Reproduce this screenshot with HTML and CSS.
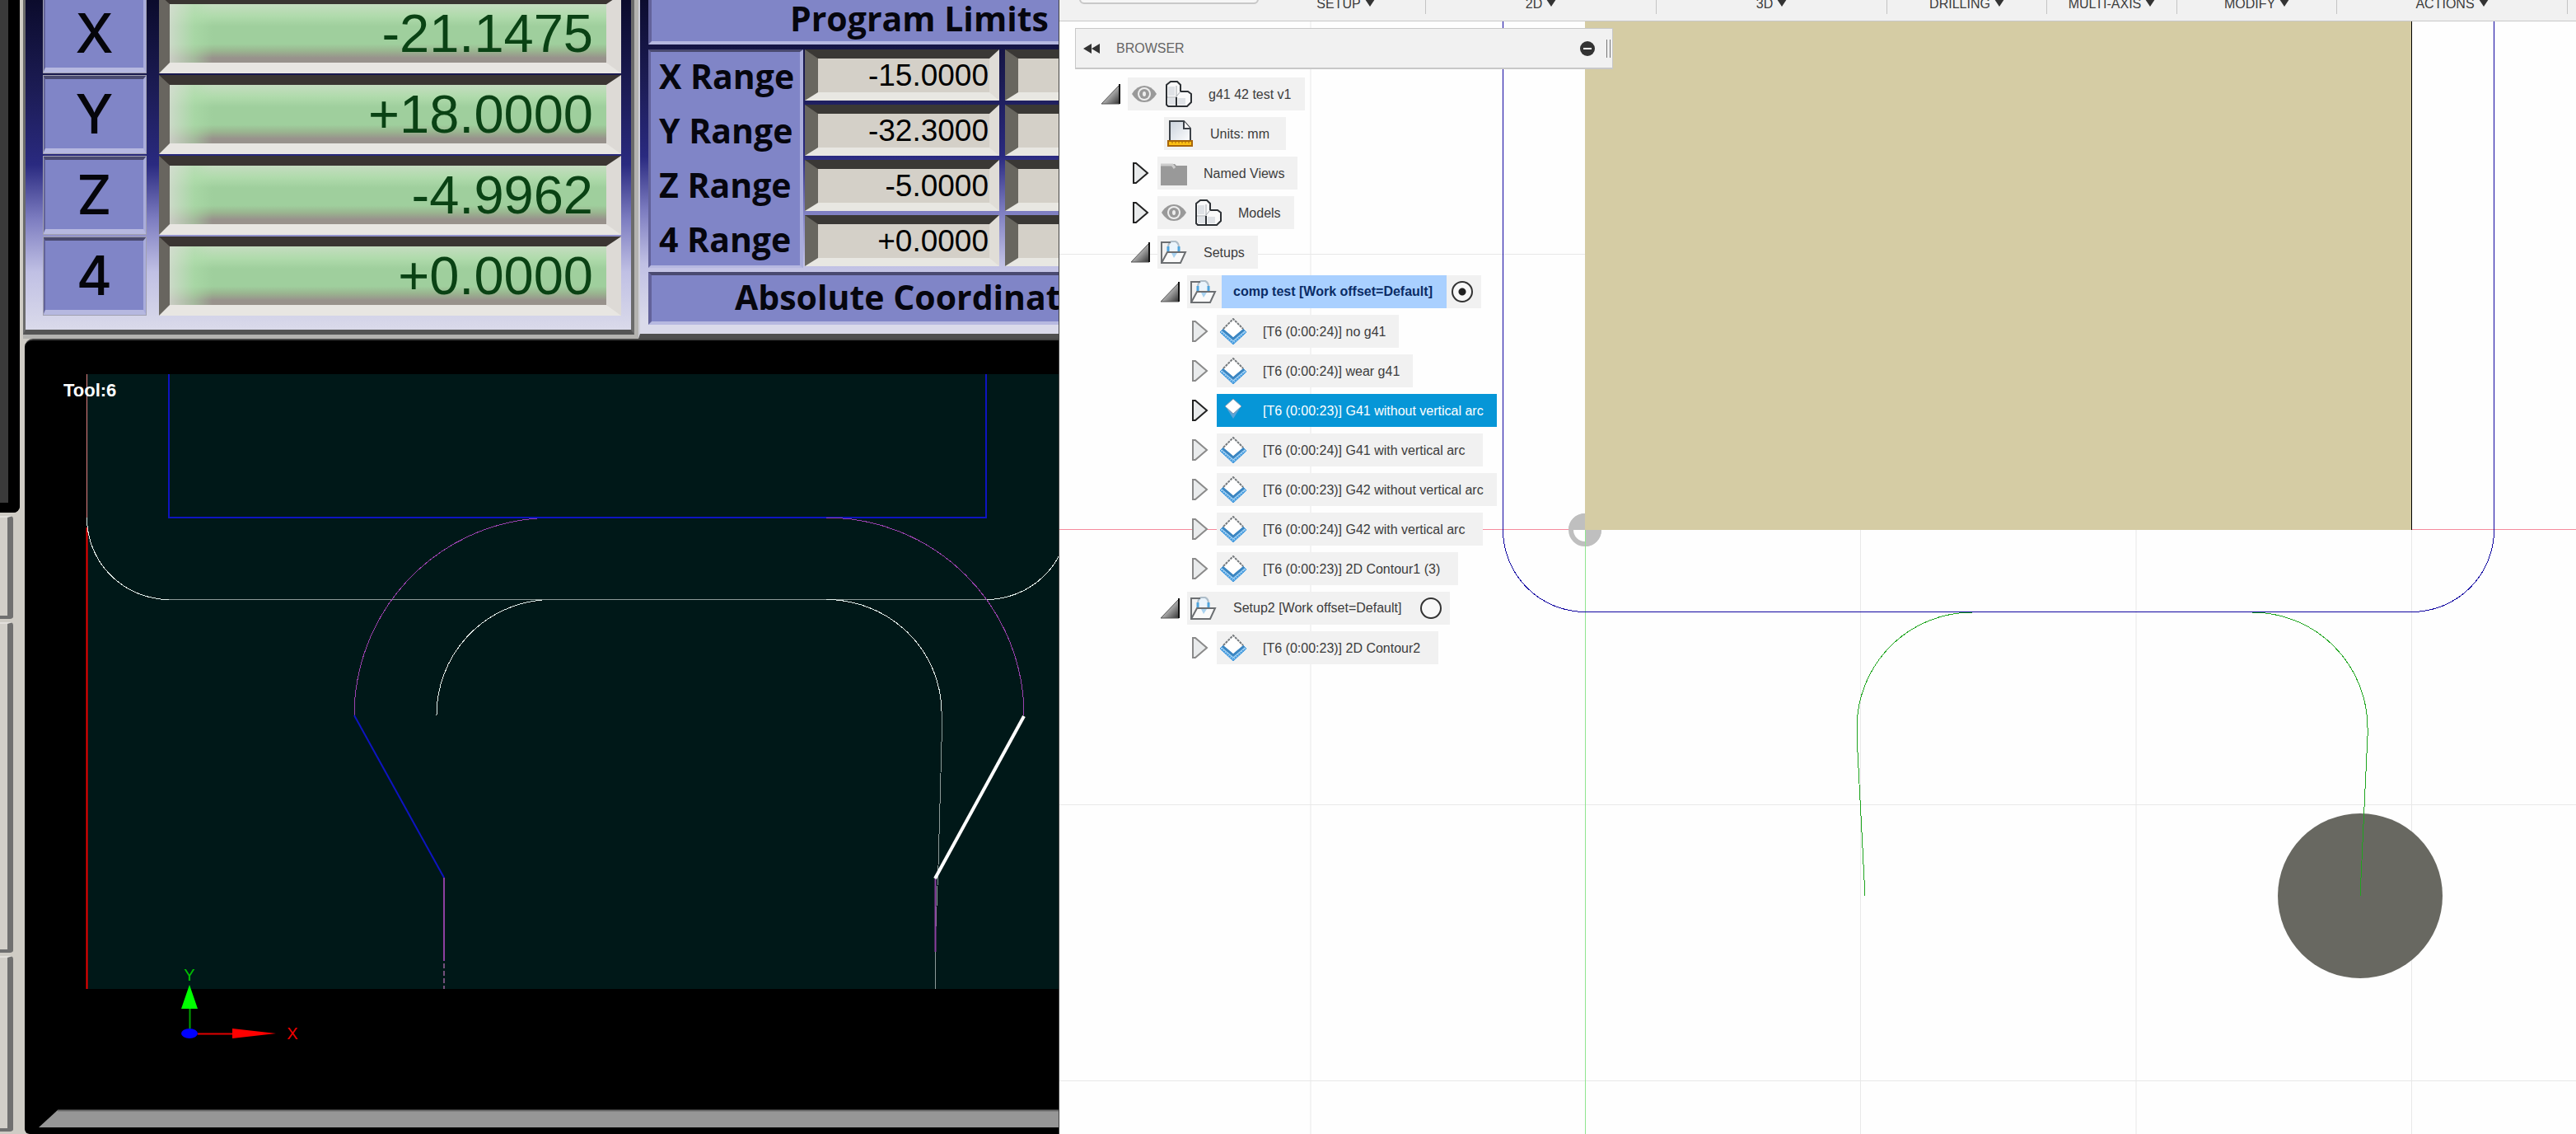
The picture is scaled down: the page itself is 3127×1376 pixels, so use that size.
FILE: index.html
```html
<!DOCTYPE html>
<html lang="en">
<head>
    <meta charset="UTF-8">
    <meta name="viewport" content="width=device-width, initial-scale=1.0">
    <title>Toolpath comparison</title>
    <link rel="stylesheet" href="styles.css">
</head>
<body>
    <!-- shared icons -->
    <svg class="defs" width="0" height="0">
        <defs>
            <linearGradient id="triFill" x1="0" y1="0" x2="1" y2="1">
                <stop offset="0.3" stop-color="#dddddd"/>
                <stop offset="1" stop-color="#333333"/>
            </linearGradient>
            <linearGradient id="pageFill" x1="0" y1="0" x2="1" y2="1">
                <stop offset="0" stop-color="#c9d2dc"/>
                <stop offset="1" stop-color="#ffffff"/>
            </linearGradient>
        </defs>
        <symbol id="open" viewBox="0 0 26 28">
            <path d="M2 26 L24 3 V26 Z" fill="url(#triFill)" stroke="#555" stroke-width="1"/>
            <path d="M24 2 V26" stroke="#111" stroke-width="2"/>
        </symbol>
        <symbol id="closed" viewBox="0 0 26 28">
            <path d="M5 2 H8 L22 14 L8 26 H5 Z" fill="#e9ebec" stroke="currentColor" stroke-width="2"/>
        </symbol>
        <symbol id="eye" viewBox="0 0 32 32">
            <path d="M1 16 Q7 6 16 6 Q25 6 31 16 Q25 26 16 26 Q7 26 1 16 Z" fill="#999"/>
            <circle cx="16" cy="16" r="8" fill="#eee"/>
            <circle cx="16" cy="16" r="6" fill="#999"/>
            <ellipse cx="16" cy="16" rx="2" ry="3" fill="#eee"/>
        </symbol>
        <symbol id="body" viewBox="0 0 32 32">
            <path d="M1 5 L6 1 H14 L18 5 V13 H27 L31 16 V26 L26 31 H3 L1 29 Z" fill="#fafafa" stroke="#2d3135" stroke-width="2"/>
            <path d="M3 7 H11 V18 H3 Z M3 21 H12 V29 H3 Z M15 21 H24 V29 H15 Z" fill="#dfe2e6"/>
            <path d="M2 20 H13 M13 30 V19 L18 13 M13 19 V6" stroke="#a4a9ae" stroke-width="1" fill="none"/>
            <path d="M13 20 V31" stroke="#2d3135" stroke-width="2"/>
        </symbol>
        <symbol id="page" viewBox="0 0 32 32">
            <path d="M3 26 V1 H20 L28 10 V26" fill="url(#pageFill)" stroke="#3c4248" stroke-width="2"/>
            <path d="M20 1 V10 H28" fill="#fff" stroke="#3c4248" stroke-width="2"/>
            <rect x="1" y="25" width="29" height="6" fill="#fdc114" stroke="#a8660a" stroke-width="2"/>
            <path d="M6 25 V28 M10 25 V28 M14 25 V28 M18 25 V28 M22 25 V28 M26 25 V28" stroke="#a8660a" stroke-width="1"/>
        </symbol>
        <symbol id="folder" viewBox="0 0 32 32">
            <path d="M0 5 H17 L19 7 H32 V31 H0 Z" fill="#999"/>
            <path d="M0 6 H14 L17 10" fill="none" stroke="#ccc" stroke-width="3"/>
        </symbol>
        <symbol id="setup" viewBox="0 0 32 32">
            <path d="M9 14 V10 Q9 5 13 3 H18 Q22 5 22 10 V14" fill="#eaf4fc" stroke="#aebdc9" stroke-width="2"/>
            <path d="M9 9 V15 M22 9 V15" stroke="#4ea3dc" stroke-width="3"/>
            <path d="M12 4 H1 V29" fill="none" stroke="#6c6f72" stroke-width="2"/>
            <path d="M8 16 H30 L24 29 H1 Z" fill="#fafafa" stroke="#6c6f72" stroke-width="2"/>
            <path d="M13 17 H20 L16 23 Z" fill="#a9d2f0"/>
        </symbol>
        <symbol id="op" viewBox="0 0 32 32">
            <path d="M0 17 L4 13 L16 24 L28 13 L32 17 L16 32 Z" fill="#a5d3f5" stroke="#3f97dc" stroke-width="1"/>
            <path d="M2 18 L16 30 L30 18" fill="none" stroke="#3f97dc" stroke-width="2" stroke-dasharray="2 1"/>
            <path d="M3 14 L16 25 L29 14" fill="none" stroke="#3b86c2" stroke-width="3"/>
            <path d="M16 1 L28 13 L16 23 L4 13 Z" fill="#fff"/>
            <path d="M4 13 L16 1 L28 13" fill="none" stroke="#75797c" stroke-width="2" stroke-dasharray="3 1"/>
        </symbol>
        <symbol id="opActive" viewBox="0 0 32 32">
            <path d="M16 12 L23 15 L16 26 L9 15 Z" fill="#7fa9d8" opacity="0.7"/>
            <path d="M16 2 L26 11 L16 20 L6 11 Z" fill="#fff" stroke="#7f98ae" stroke-width="1"/>
        </symbol>
    </svg>

    <div class="screen">
        <section class="mach">
            <div class="side">
                <div class="side-screen"></div>
                <div class="side-key key-1"></div>
                <div class="side-key key-2"></div>
                <div class="side-key key-3"></div>
            </div>

            <div class="mach-main">
                <div class="panels">
                    <div class="panel dro">
                        <label class="axis" for="dro-x">X</label>
                        <input class="readout" id="dro-x" value="-21.1475" readonly>
                        <label class="axis" for="dro-y">Y</label>
                        <input class="readout" id="dro-y" value="+18.0000" readonly>
                        <label class="axis" for="dro-z">Z</label>
                        <input class="readout" id="dro-z" value="-4.9962" readonly>
                        <label class="axis" for="dro-4">4</label>
                        <input class="readout" id="dro-4" value="+0.0000" readonly>
                    </div>

                    <div class="panel limits">
                        <div class="plate plate-top">Program Limits</div>
                        <div class="ranges">
                            <div class="range-labels">
                                <label for="min-x">X Range</label>
                                <label for="min-y">Y Range</label>
                                <label for="min-z">Z Range</label>
                                <label for="min-4">4 Range</label>
                            </div>
                            <div class="range-col">
                                <input class="limit" id="min-x" value="-15.0000" readonly>
                                <input class="limit" id="min-y" value="-32.3000" readonly>
                                <input class="limit" id="min-z" value="-5.0000" readonly>
                                <input class="limit" id="min-4" value="+0.0000" readonly>
                            </div>
                            <div class="range-col">
                                <input class="limit" aria-label="X max" readonly>
                                <input class="limit" aria-label="Y max" readonly>
                                <input class="limit" aria-label="Z max" readonly>
                                <input class="limit" aria-label="4 max" readonly>
                            </div>
                        </div>
                        <div class="plate plate-bottom">Absolute Coordinates</div>
                    </div>
                </div>

                <div class="display">
                    <svg class="plot" viewBox="30 413 1256 963" preserveAspectRatio="xMinYMin slice">
                        <rect x="105" y="454" width="1300" height="746" fill="#001818"/>
                        <!-- soft limits -->
                        <path class="hair" d="M105.5 454 V628" stroke="#e08080"/>
                        <path d="M105.5 640 V1200" stroke="#f00000" stroke-width="2"/>
                        <!-- part outline -->
                        <path d="M205 454 V628 H1197 V454" fill="none" stroke="#0e14c0" stroke-width="2"/>
                        <path class="hair" d="M205 727.5 H1197" stroke="#8c9a98"/>
                        <path class="hair" d="M105.5 628 A100 99 0 0 0 205 727.5 M1197 727.5 A100 99 0 0 0 1297 628" stroke="#e4f0ec"/>
                        <path class="hair" d="M530 868 A140 140 0 0 1 658 728 M1003 727.5 A140 137 0 0 1 1143 863" stroke="#e4f0ec"/>
                        <path class="hair" d="M1144 863 L1139 1050 L1135 1150 V1200" stroke="#8c9a98"/>
                        <!-- compensated moves -->
                        <path class="hair" d="M430 868 A240 240 0 0 1 652 629 M1003 628 A240 240 0 0 1 1243 868" stroke="#9a42b0"/>
                        <path d="M430 868 L539 1065" stroke="#0e14c0" stroke-width="2"/>
                        <path d="M539 1065 V1166 M1135.5 1066 V1155" stroke="#8c3fa0" stroke-width="2"/>
                        <path d="M539 1169 V1200" stroke="#73507c" stroke-width="2" stroke-dasharray="6 3"/>
                        <path d="M1243 869 L1135 1066" stroke="#fff" stroke-width="4"/>
                        <text class="tool" x="77" y="481">Tool:6</text>
                        <!-- axis triad -->
                        <path d="M230.5 1248 V1222" stroke="#00a000" stroke-width="2"/>
                        <path d="M230 1195 L240 1224 H220 Z" fill="#00ff00"/>
                        <path d="M240 1254.5 H282" stroke="#e00000" stroke-width="2"/>
                        <path d="M282 1248 L335 1254 L282 1260 Z" fill="#ff0000"/>
                        <ellipse cx="230" cy="1254" rx="10" ry="6" fill="#0000ff"/>
                        <text class="axis-y" x="230" y="1190">Y</text>
                        <text class="axis-x" x="355" y="1261">X</text>
                        <path d="M70 1347 H1400 V1368 H47 Z" fill="#969696"/>
                        <path d="M70 1347.5 H1400" stroke="#6b6b6b" stroke-width="2"/>
                    </svg>
                </div>
            </div>
        </section>

        <section class="fusion">
            <nav class="toolbar">
                <div class="workspace"><button class="workspace-btn" aria-label="Workspace"></button></div>
                <button class="menu">SETUP<i class="caret"></i></button>
                <button class="menu">2D<i class="caret"></i></button>
                <button class="menu">3D<i class="caret"></i></button>
                <button class="menu">DRILLING<i class="caret"></i></button>
                <button class="menu">MULTI-AXIS<i class="caret"></i></button>
                <button class="menu">MODIFY<i class="caret"></i></button>
                <button class="menu">ACTIONS<i class="caret"></i></button>
            </nav>

            <div class="canvas">
                <svg class="scene" viewBox="1286 26 1841 1350" preserveAspectRatio="xMinYMin slice">
                    <path d="M1591 26 V1376 M2258.5 643 V1376 M2593 643 V1376 M2927.5 643 V1376 M1286 308.5 H1924 M1286 976.5 H3127 M1286 1311.5 H3127" stroke="#e8e8e8" stroke-width="1"/>
                    <path d="M1286 642.5 H1924 M2928 642.5 H3127" stroke="#f58a9c" stroke-width="1"/>
                    <!-- origin marker -->
                    <circle cx="1924" cy="643" r="17" fill="#fff" stroke="#bfbfbf" stroke-width="6"/>
                    <path d="M1924 643 V623 A20 20 0 0 0 1904 643 Z M1924 643 V663 A20 20 0 0 0 1944 643 Z" fill="#bfbfbf"/>
                    <path d="M1924.5 643 V1376" stroke="#8fe58f" stroke-width="1"/>
                    <!-- stock -->
                    <rect x="1924" y="26" width="1003" height="617" fill="#d5cca4"/>
                    <path d="M2927.5 26 V643" stroke="#000" stroke-width="1"/>
                    <!-- tool -->
                    <circle cx="2865" cy="1087" r="100" fill="#686861"/>
                    <!-- toolpath -->
                    <path class="hair" d="M2394 743 A140 140 0 0 0 2254 883 V893 L2264 1087 M2734 743 A140 140 0 0 1 2874 883 V893 L2865 1087" stroke="#1fa51f"/>
                    <path class="hair" d="M1824.5 26 V643 A100 99.5 0 0 0 1924.5 742.5 H2927.5 A100 99.5 0 0 0 3027.5 643 V26" stroke="#1004a0"/>
                </svg>

                <aside class="browser">
                    <header class="browser-head">
                        <svg class="rewind" viewBox="0 0 20 12"><path d="M10 0 V12 L0 6 Z M20 0 V12 L10 6 Z" fill="#333"/></svg>
                        <span>BROWSER</span>
                        <button class="collapse" aria-label="Collapse"></button>
                        <i class="grip"></i>
                    </header>

                    <ul class="tree">
                        <li>
                            <div class="row"><svg class="arrow"><use href="#open"/></svg><div class="node"><svg class="icon"><use href="#eye"/></svg><svg class="icon"><use href="#body"/></svg><span>g41 42 test v1</span></div></div>
                            <ul>
                                <li><div class="row"><div class="node units"><svg class="icon"><use href="#page"/></svg><span>Units: mm</span></div></div></li>
                                <li><div class="row"><svg class="arrow"><use href="#closed"/></svg><div class="node"><svg class="icon"><use href="#folder"/></svg><span>Named Views</span></div></div></li>
                                <li><div class="row"><svg class="arrow"><use href="#closed"/></svg><div class="node"><svg class="icon"><use href="#eye"/></svg><svg class="icon"><use href="#body"/></svg><span>Models</span></div></div></li>
                                <li>
                                    <div class="row"><svg class="arrow"><use href="#open"/></svg><div class="node"><svg class="icon"><use href="#setup"/></svg><span>Setups</span></div></div>
                                    <ul>
                                        <li>
                                            <div class="row"><svg class="arrow"><use href="#open"/></svg><div class="node setup current"><svg class="icon"><use href="#setup"/></svg><label for="setup-1">comp test [Work offset=Default]</label><input type="radio" name="setup" id="setup-1" checked></div></div>
                                            <ul>
                                                <li><div class="row"><svg class="arrow dim"><use href="#closed"/></svg><div class="node"><svg class="icon"><use href="#op"/></svg><span>[T6 (0:00:24)] no g41</span></div></div></li>
                                                <li><div class="row"><svg class="arrow dim"><use href="#closed"/></svg><div class="node"><svg class="icon"><use href="#op"/></svg><span>[T6 (0:00:24)] wear g41</span></div></div></li>
                                                <li><div class="row"><svg class="arrow"><use href="#closed"/></svg><div class="node selected"><svg class="icon"><use href="#opActive"/></svg><span>[T6 (0:00:23)] G41 without vertical arc</span></div></div></li>
                                                <li><div class="row"><svg class="arrow dim"><use href="#closed"/></svg><div class="node loose"><svg class="icon"><use href="#op"/></svg><span>[T6 (0:00:24)] G41 with vertical arc</span></div></div></li>
                                                <li><div class="row"><svg class="arrow dim"><use href="#closed"/></svg><div class="node"><svg class="icon"><use href="#op"/></svg><span>[T6 (0:00:23)] G42 without vertical arc</span></div></div></li>
                                                <li><div class="row"><svg class="arrow dim"><use href="#closed"/></svg><div class="node loose"><svg class="icon"><use href="#op"/></svg><span>[T6 (0:00:24)] G42 with vertical arc</span></div></div></li>
                                                <li><div class="row"><svg class="arrow dim"><use href="#closed"/></svg><div class="node loose"><svg class="icon"><use href="#op"/></svg><span>[T6 (0:00:23)] 2D Contour1 (3)</span></div></div></li>
                                            </ul>
                                        </li>
                                        <li>
                                            <div class="row"><svg class="arrow"><use href="#open"/></svg><div class="node setup"><svg class="icon"><use href="#setup"/></svg><label for="setup-2">Setup2 [Work offset=Default]</label><input type="radio" name="setup" id="setup-2"></div></div>
                                            <ul>
                                                <li><div class="row"><svg class="arrow dim"><use href="#closed"/></svg><div class="node loose"><svg class="icon"><use href="#op"/></svg><span>[T6 (0:00:23)] 2D Contour2</span></div></div></li>
                                            </ul>
                                        </li>
                                    </ul>
                                </li>
                            </ul>
                        </li>
                    </ul>
                </aside>
            </div>
        </section>
    </div>
</body>
</html>
```

FILE: styles.css
```css
* {
    box-sizing: border-box;
}
body {
    margin: 0;
    font-family: "Liberation Sans", Arial, sans-serif;
    font-size: 16px;
    overflow: hidden;
}
button, input {
    font: inherit;
    margin: 0;
}
.defs {
    position: absolute;
}
.screen {
    display: grid;
    grid-template-columns: 1286fr 1841fr;
    height: 100vh;
}

/* machine controller */
.mach {
    display: flex;
    min-width: 0;
    overflow: hidden;
    background: #cfccc5;
}
.side {
    width: 28px;
    flex: none;
    display: flex;
    flex-direction: column;
    gap: 4px;
    padding-bottom: 3px;
}
.side-screen {
    width: 24px;
    height: 622px;
    flex: none;
    background: #3a3a3a;
    border: solid #000;
    border-width: 0 14px 12px 0;
    border-radius: 0 0 8px 0;
}
.side-key {
    width: 16px;
    background: #d2cfc9;
    border: solid #707070;
    border-width: 0 7px 4px 0;
    border-top: 2px solid #e2e0dc;
    border-radius: 0 4px 4px 0;
}
.key-1 {
    flex: 122;
}
.key-2 {
    flex: 405;
}
.key-3 {
    flex: 212;
}
.mach-main {
    flex: 1;
    min-width: 0;
    display: flex;
    flex-direction: column;
}
.panels {
    display: flex;
    gap: 5px;
    height: 411px;
    flex: none;
    overflow: hidden;
    background: #b4b3b0;
}
.panel {
    background: linear-gradient(#0b0b2c 0, #1c1c55 110px, #2a2a80 200px, #7c7cc0 265px, #c0c0e4 330px, #dadaea 400px);
}
.dro {
    width: 742px;
    height: 406px;
    flex: none;
    display: grid;
    grid-template-columns: 126px 561px;
    grid-auto-rows: 96px;
    gap: 2px 15px;
    align-content: end;
    padding: 0 0 17px 21px;
    border: solid #6b6b6b;
    border-width: 0 4px 6px 3px;
    border-bottom-color: #555;
    overflow: hidden;
}
.axis {
    display: flex;
    align-items: center;
    justify-content: center;
    font-family: Inter, sans-serif;
    font-size: 66px;
    font-weight: 500;
    line-height: 1;
    color: #05050a;
    background: #8085c7;
    border: solid;
    border-width: 5px 4px 7px 3px;
    border-color: #4a4a70 #a9acdc #b6b8e0 #62629a;
    outline: 1px solid #a0a0b0;
    outline-offset: -1px;
}
.readout {
    width: 100%;
    height: 96px;
    padding: 0 16px 0 0;
    font-size: 65px;
    line-height: 72px;
    text-align: right;
    color: #0a4214;
    border: solid;
    border-width: 12px 18px 13px 13px;
    border-color: #3a3532 #dddad6 #e8e6e2 #68655f;
    border-radius: 0;
    outline: none;
    background:
        linear-gradient(90deg, rgba(214, 220, 210, 0.8), rgba(176, 222, 172, 0.5) 30px, transparent 52px),
        linear-gradient(#c5dcc0 0, #b0dbac 20%, #9fcf9d 38%, #9fcf9d 68%, #9ab590 80%, #98928c 92%);
}
.limits {
    flex: 1;
    min-width: 0;
    margin-top: -10px;
    padding: 0 0 0 10px;
    border-left: 2px solid #d0d0d8;
    border-bottom: 6px solid #505050;
    overflow: hidden;
    white-space: nowrap;
}
.plate, .range-labels {
    font-family: "Open Sans", sans-serif;
    font-size: 41px;
    font-weight: 700;
    color: #06060e;
    background: #8085c7;
    border: solid;
    border-color: #4a4a70 #a9acdc #b6b8e0 #62629a;
}
.plate {
    width: 700px;
    border-width: 4px;
}
.plate-top {
    height: 64px;
    line-height: 56px;
    padding-left: 168px;
}
.plate-bottom {
    height: 64px;
    line-height: 52px;
    padding-left: 101px;
    margin-top: 5px;
}
.ranges {
    display: flex;
    gap: 7px;
    margin-top: 6px;
}
.range-labels {
    width: 188px;
    flex: none;
    margin-right: -5px;
    border-width: 3px 4px 3px 3px;
    padding-left: 10px;
    display: flex;
    flex-direction: column;
    gap: 5px;
}
.range-labels label {
    height: 61px;
    line-height: 58px;
}
.range-col {
    width: 236px;
    flex: none;
    display: flex;
    flex-direction: column;
    gap: 5px;
}
.limit {
    width: 236px;
    height: 62px;
    padding: 0 1px;
    font-size: 37px;
    text-align: right;
    color: #000;
    background: #d4d0c8;
    border: solid;
    border-width: 11px 12px 10px 16px;
    border-color: #3a3835 #e0ddd7 #e8e7e2 #68665f;
    border-radius: 0;
    outline: none;
}
.display {
    flex: 1;
    min-height: 0;
    margin-left: 2px;
    background: #000;
    border-top: 2px solid #444;
    border-radius: 10px 0 0 6px;
    overflow: hidden;
}
.plot, .scene {
    display: block;
    width: 100%;
    height: 100%;
}
.hair {
    fill: none;
    stroke-width: 1px;
    shape-rendering: crispEdges;
}
.tool {
    font-size: 22px;
    font-weight: bold;
    fill: #fff;
}
.axis-x, .axis-y {
    font-size: 20px;
    text-anchor: middle;
}
.axis-x {
    fill: #f00000;
}
.axis-y {
    fill: #00c000;
}

/* CAM window */
.fusion {
    position: relative;
    min-width: 0;
    display: flex;
    flex-direction: column;
    color: #3c3c3c;
    box-shadow: -1px 0 #444;
}
.toolbar {
    height: 26px;
    flex: none;
    display: grid;
    grid-template-columns: 251fr 194fr 280fr 280fr 194fr 158fr 194fr 280fr 10fr;
    background: #f1f1f1;
    border-bottom: 1px solid #c8c8c8;
    overflow: hidden;
}
.workspace {
    padding-left: 24px;
}
.workspace-btn {
    display: block;
    width: 218px;
    height: 30px;
    margin-top: -25px;
    background: #f6f6f6;
    border: 2px solid #c8c8c8;
    border-radius: 6px;
}
.menu {
    display: flex;
    justify-content: center;
    align-items: flex-start;
    gap: 5px;
    height: 21px;
    margin-top: -4px;
    padding: 0;
    line-height: 18px;
    color: #3c3c3c;
    background: none;
    border: 0;
    border-right: 1px solid #c4c4c4;
}
.caret {
    margin-top: 3px;
    border: solid transparent;
    border-width: 9px 6px 0;
    border-top-color: #333;
}
.canvas {
    position: relative;
    flex: 1;
    min-height: 0;
    background: #fefefe;
}
.browser {
    position: absolute;
    top: 8px;
    left: 19px;
    width: 653px;
}
.browser-head {
    display: flex;
    align-items: center;
    height: 50px;
    padding: 0 2px 0 9px;
    color: #666;
    background: #f1f1f1;
    border: 1px solid #c8c8c8;
    border-bottom-width: 2px;
}
.rewind {
    width: 20px;
    height: 12px;
    margin-right: 20px;
}
.collapse {
    width: 18px;
    height: 18px;
    margin-left: auto;
    padding: 0 4px;
    background: linear-gradient(#fff, #fff) center / 10px 2px no-repeat #333;
    border: 0;
    border-radius: 50%;
}
.grip {
    width: 5px;
    height: 22px;
    margin-left: 14px;
    border: solid #777;
    border-width: 0 1px;
}
.tree, .tree ul {
    list-style: none;
    margin: 0;
    padding: 0;
}
.tree {
    padding: 10px 0 0 30px;
}
.tree ul {
    padding-left: 36px;
}
.row {
    display: flex;
    align-items: center;
    height: 40px;
    margin-bottom: 8px;
}
.arrow {
    width: 26px;
    height: 28px;
    margin-right: 8px;
    color: #222;
}
.arrow.dim {
    color: #8a8a8a;
}
.node {
    display: flex;
    align-items: center;
    gap: 10px;
    height: 40px;
    padding: 0 16px 0 4px;
    background: #f1f1f1;
    white-space: nowrap;
}
.node span {
    margin-left: 10px;
    padding-top: 1px;
}
.node.loose {
    padding-right: 22px;
}
.units {
    margin-left: 42px;
    padding-right: 20px;
}
.icon {
    width: 32px;
    height: 32px;
}
.selected {
    color: #fff;
    background: #0696d7;
}
.setup {
    gap: 6px;
    padding-right: 10px;
}
.setup label {
    padding: 0 17px 0 14px;
    line-height: 40px;
}
.current label {
    font-weight: bold;
    color: #0a2c66;
    background: #a9d0ff;
}
.setup input {
    appearance: none;
    width: 26px;
    height: 26px;
    background: #f8f8f8;
    border: 2px solid #333;
    border-radius: 50%;
}
.setup input:checked {
    background: radial-gradient(circle, #222 0 4px, #f8f8f8 5px);
}
```
